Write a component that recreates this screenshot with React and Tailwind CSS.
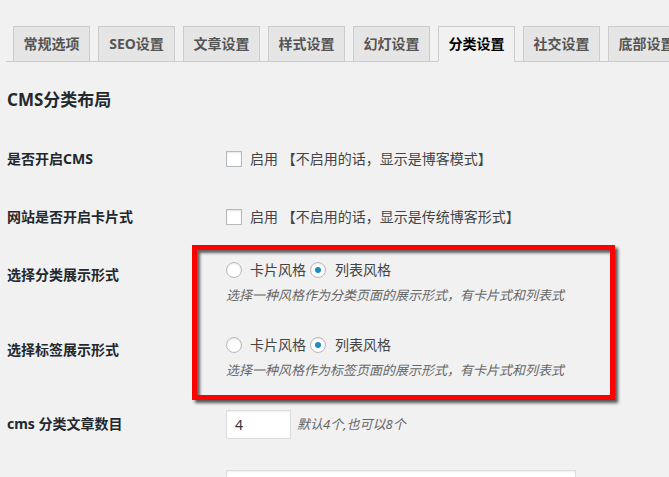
const font = {
  fontFamily: '"Noto Sans", "Noto Sans CJK SC", sans-serif',
};

const tabs = [
  "常规选项",
  "SEO设置",
  "文章设置",
  "样式设置",
  "幻灯设置",
  "分类设置",
  "社交设置",
  "底部设置",
];

const Checkbox = () => (
  <span className="inline-block h-4 w-4 shrink-0 border border-[#b4b9be] bg-white shadow-[inset_0_1px_2px_rgba(0,0,0,0.1)]" />
);

const Radio = ({ checked }) => (
  <span className="flex h-4 w-4 shrink-0 items-center justify-center rounded-full border border-[#b4b9be] bg-white shadow-[inset_0_1px_2px_rgba(0,0,0,0.1)]">
    {checked && <span className="h-[6px] w-[6px] rounded-full bg-[#1e8cbe]" />}
  </span>
);

const RadioGroup = ({ desc }) => (
  <div className="pt-[14px]">
    <div className="flex h-5 items-center text-[14px] leading-5 text-[#444]">
      <Radio />
      <span className="ml-2">卡片风格</span>
      <span className="ml-1">
        <Radio checked />
      </span>
      <span className="ml-[9px]">列表风格</span>
    </div>
    <p className="mt-[5px] text-[13px] italic leading-5 text-[#666]">{desc}</p>
  </div>
);

export default function App() {
  return (
    <div
      className="h-[477px] w-[669px] overflow-hidden bg-[#f1f1f1] text-[#23282d]"
      style={font}
    >
      <div className="ml-[6px] flex h-[62px] items-end gap-2 border-b border-[#ccc] pl-[7px]">
        {tabs.map((tab) => {
          const active = tab === "分类设置";
          return (
            <div
              key={tab}
              className={`-mb-px flex h-[36px] w-[77px] shrink-0 items-center justify-center border border-[#ccc] text-[14px] font-bold leading-5 ${
                active
                  ? "border-b-[#f1f1f1] bg-[#f1f1f1] text-black"
                  : "bg-[#e5e5e5] text-[#555]"
              }`}
            >
              {tab}
            </div>
          );
        })}
      </div>

      <h2 className="ml-[7px] mt-[26px] h-6 text-[17px] font-bold leading-6 text-[#23282d]">
        CMS分类布局
      </h2>

      <div className="mt-[18px] pl-[7px]">
        <div className="flex h-[58px] items-center">
          <div className="w-[219px] text-[14px] font-bold leading-5">是否开启CMS</div>
          <div className="flex items-center text-[14px] leading-5 text-[#444]">
            <Checkbox />
            <span className="ml-2">启用 【不启用的话，显示是博客模式】</span>
          </div>
        </div>

        <div className="flex h-[58px] items-center">
          <div className="w-[219px] text-[14px] font-bold leading-5">网站是否开启卡片式</div>
          <div className="flex items-center text-[14px] leading-5 text-[#444]">
            <Checkbox />
            <span className="ml-2">启用 【不启用的话，显示是传统博客形式】</span>
          </div>
        </div>

        <div className="relative">
          <div className="flex h-[75px] items-start">
            <div className="w-[219px] pt-[19px] text-[14px] font-bold leading-5">
              选择分类展示形式
            </div>
            <RadioGroup desc="选择一种风格作为分类页面的展示形式，有卡片式和列表式" />
          </div>
          <div className="flex h-[75px] items-start">
            <div className="w-[219px] pt-[19px] text-[14px] font-bold leading-5">
              选择标签展示形式
            </div>
            <RadioGroup desc="选择一种风格作为标签页面的展示形式，有卡片式和列表式" />
          </div>
          <div className="pointer-events-none absolute left-[185px] top-[-1px] h-[155px] w-[423px] border-[5px] border-[#ff0000] shadow-[3px_3px_3px_rgba(0,0,0,0.65),inset_3px_3px_3px_rgba(0,0,0,0.6)]" />
        </div>

        <div className="flex h-[56px] items-center">
          <div className="w-[219px] text-[14px] font-bold leading-5">cms 分类文章数目</div>
          <div className="flex items-center">
            <div className="flex h-[29px] w-[65px] items-center border border-[#ddd] bg-white pl-2 text-[14px] text-[#32373c] shadow-[inset_0_1px_2px_rgba(0,0,0,0.07)]">
              4
            </div>
            <span className="ml-[6px] text-[13px] italic leading-5 text-[#666]">
              默认4个,也可以8个
            </span>
          </div>
        </div>

        <div className="flex pt-[18px]">
          <div className="w-[219px]" />
          <div className="h-[30px] w-[350px] border border-[#ddd] bg-white shadow-[inset_0_1px_2px_rgba(0,0,0,0.07)]" />
        </div>
      </div>
    </div>
  );
}
